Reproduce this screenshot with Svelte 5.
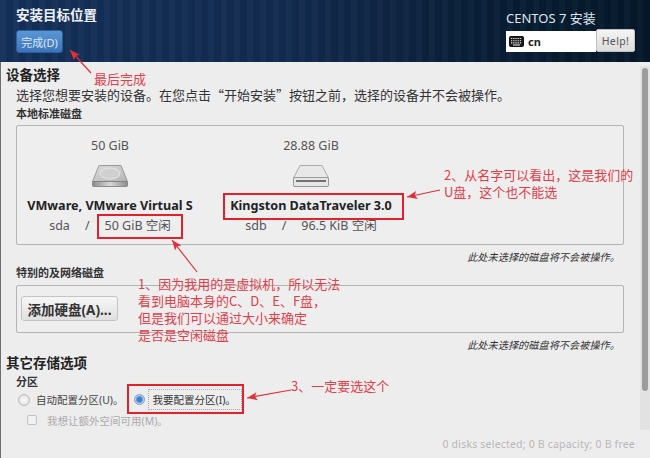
<script>
	const disks = [
		{ size: '50 GiB', name: 'VMware, VMware Virtual S', dev: 'sda', free: '50 GiB 空闲', kind: 'hdd' },
		{ size: '28.88 GiB', name: 'Kingston DataTraveler 3.0', dev: 'sdb', free: '96.5 KiB 空闲', kind: 'usb' }
	];

	const arrows = [
		{ x1: 91, y1: 73, x2: 70, y2: 50 },
		{ x1: 197, y1: 272, x2: 172, y2: 240 },
		{ x1: 440, y1: 190, x2: 407, y2: 197 },
		{ x1: 291, y1: 390, x2: 247, y2: 398 }
	];

	function head(a) {
		const ang = Math.atan2(a.y1 - a.y2, a.x1 - a.x2);
		const pt = (len, off) => {
			const x = a.x2 + Math.cos(ang + off) * len;
			const y = a.y2 + Math.sin(ang + off) * len;
			return `${x.toFixed(1)},${y.toFixed(1)}`;
		};
		return `${a.x2},${a.y2} ${pt(11, 0.38)} ${pt(8, 0)} ${pt(11, -0.38)}`;
	}
</script>

<div class="page" lang="zh-CN">
	<header>
		<div class="left">
			<h1>安装目标位置</h1>
			<button class="done">完成(D)</button>
		</div>
		<div class="right">
			<div class="product">CENTOS 7 安装</div>
			<div class="tools">
				<div class="layout">
					<svg width="15" height="11" viewBox="0 0 15 11">
						<rect x="0.5" y="0.5" width="14" height="10" rx="1" fill="#1c1c1c" stroke="#111" />
						<path d="M2 2.5h11M2 4.7h11M2 6.9h11" stroke="#e4e4e4" stroke-width="1.1" stroke-dasharray="1.3 0.9" />
						<path d="M4 9h7" stroke="#e4e4e4" stroke-width="1.1" />
					</svg>
					<span>cn</span>
				</div>
				<button class="help">Help!</button>
			</div>
		</div>
	</header>

	<main>
		<div class="content">
			<h2>设备选择</h2>
			<p class="desc">选择您想要安装的设备。在您点击“开始安装”按钮之前&#xFF0C;选择的设备并不会被操作。</p>
			<h3>本地标准磁盘</h3>
			<section class="box disks">
				{#each disks as d}
					<div class="disk">
						<div class="size">{d.size}</div>
						{#if d.kind === 'hdd'}
							<svg class="icon" width="36" height="22" viewBox="0 0 36 22">
								<defs>
									<linearGradient id="hddtop" x1="0" y1="0" x2="1" y2="1">
										<stop offset="0" stop-color="#dcdcdc" />
										<stop offset="1" stop-color="#b4b4b4" />
									</linearGradient>
									<linearGradient id="hddfront" x1="0" y1="0" x2="1" y2="0">
										<stop offset="0" stop-color="#8c8c8c" />
										<stop offset="0.5" stop-color="#d8d8d8" />
										<stop offset="1" stop-color="#8c8c8c" />
									</linearGradient>
								</defs>
								<path d="M7 0.5h22l6.5 16H0.5z" fill="url(#hddtop)" stroke="#9a9a9a" />
								<ellipse cx="18" cy="8.5" rx="10" ry="5.5" fill="#d0d0d0" stroke="#e8e8e8" />
								<rect x="0.5" y="16.5" width="35" height="5" rx="1" fill="url(#hddfront)" stroke="#7a7a7a" stroke-width="0.8" />
							</svg>
						{:else}
							<svg class="icon" width="36" height="22" viewBox="0 0 36 22">
								<path d="M7 0.5h22l6.5 12.5H0.5z" fill="#e8e8e8" stroke="#ababab" />
								<rect x="0.5" y="12.5" width="35" height="9" rx="1.5" fill="#e6e6e6" stroke="#999" />
								<path d="M3 16h30" stroke="#555" stroke-width="1.6" />
							</svg>
						{/if}
						<div class="name">{d.name}</div>
						<div class="sub"><span>{d.dev}</span><span>/</span><span>{d.free}</span></div>
					</div>
				{/each}
			</section>
			<p class="note">此处未选择的磁盘将不会被操作。</p>
			<h3 class="special">特别的及网络磁盘</h3>
			<section class="box network">
				<button class="add">添加硬盘(A)...</button>
			</section>
			<p class="note">此处未选择的磁盘将不会被操作。</p>
			<h2 class="other">其它存储选项</h2>
			<h3 class="part">分区</h3>
			<div class="radios">
				<label class="opt"><i class="radio"></i>自动配置分区(U)。</label>
				<label class="opt second"><i class="radio on"></i><span class="focus">我要配置分区(I)。</span></label>
			</div>
			<label class="extra"><i class="check"></i>我想让额外空间可用(M)。</label>
			<div class="summary">0 disks selected; 0 B capacity; 0 B free</div>
		</div>
		<div class="scrollbar"><div class="thumb"></div></div>
	</main>

	<!-- red notes drawn on top of the screenshot -->
	<div class="mark m1"></div>
	<div class="mark m2"></div>
	<div class="mark m3"></div>
	<svg class="arrows" width="650" height="458">
		{#each arrows as a}
			<line x1={a.x1} y1={a.y1} x2={a.x2} y2={a.y2} stroke="#e0303a" stroke-width="1.2" />
			<polygon points={head(a)} fill="#e0303a" />
		{/each}
	</svg>
	<div class="note-red n0">最后完成</div>
	<div class="note-red n1">1、因为我用的是虚拟机&#xFF0C;所以无法<br />看到电脑本身的C、D、E、F盘&#xFF0C;<br />但是我们可以通过大小来确定<br />是否是空闲磁盘</div>
	<div class="note-red n2">2、从名字可以看出&#xFF0C;这是我们的<br />U盘&#xFF0C;这个也不能选</div>
	<div class="note-red n3">3、一定要选这个</div>
</div>

<style>
	:global(body) {
		margin: 0;
	}

	.page {
		position: relative;
		width: 650px;
		height: 458px;
		overflow: hidden;
		background: #ededed;
		font-family: "Noto Sans", "Noto Sans CJK SC", sans-serif;
		color: #2e3436;
	}

	* {
		box-sizing: border-box;
	}

	header {
		height: 62px;
		display: flex;
		justify-content: space-between;
		padding: 8px 15px 0 16px;
		background:
			repeating-linear-gradient(90deg, rgba(255, 255, 255, 0.025) 0 6px, rgba(0, 0, 0, 0.03) 6px 13px),
			linear-gradient(90deg, #14305a 0%, #122a4e 45%, #071d33 80%, #05182a 100%);
	}

	h1 {
		margin: 0 0 7px;
		font-size: 13.5px;
		line-height: 15px;
		font-weight: 700;
		color: #eef1f4;
	}

	.done {
		display: block;
		width: 47px;
		height: 23px;
		padding: 0;
		border: 1px solid #2a5f9e;
		border-radius: 3px;
		background: linear-gradient(#5b97d6, #3b74b8);
		color: #dbe8f5;
		font: 11px "Noto Sans", "Noto Sans CJK SC", sans-serif;
	}

	.right {
		width: 129px;
	}

	.product {
		height: 21px;
		padding-top: 3px;
		font-size: 13px;
		line-height: 15px;
		color: #dfe5ea;
	}

	.tools {
		display: flex;
		align-items: flex-end;
		height: 23px;
	}

	.layout {
		display: flex;
		align-items: center;
		gap: 4px;
		width: 90px;
		height: 21px;
		padding-left: 3px;
		background: #fff;
		font-size: 11px;
		font-weight: 700;
		color: #222;
	}

	.help {
		width: 39px;
		height: 23px;
		padding: 0;
		border: 1px solid #c0c0c0;
		border-radius: 2px;
		background: linear-gradient(#f4f4f4, #dcdcdc);
		color: #555;
		font: 10.5px "Noto Sans", sans-serif;
		letter-spacing: 0.4px;
	}

	main {
		position: relative;
		height: 396px;
		border-left: 1px solid #6e6e6e;
		display: flex;
	}

	.content {
		flex: 1;
		padding: 4px 0 0 5px;
		min-width: 0;
	}

	h2 {
		margin: 0;
		font-size: 13.5px;
		line-height: 18px;
		font-weight: 700;
		color: #222;
	}

	.desc {
		margin: 2px 0 0 10px;
		font-family: "Noto Sans CJK SC", sans-serif;
		font-size: 13px;
		line-height: 17px;
		color: #333;
		white-space: nowrap;
	}

	h3 {
		margin: 4px 0 0 10px;
		font-size: 11px;
		line-height: 14px;
		font-weight: 700;
		color: #333;
	}

	.box {
		width: 608px;
		margin: 4px 0 0 10px;
		border: 1px solid #b4b4b4;
		border-radius: 2px;
		background: #eeeeee;
	}

	.disks {
		height: 120px;
		display: flex;
		gap: 15px;
		padding: 11px 0 0 0;
	}

	.disk {
		text-align: center;
		width: 186px;
		color: #444;
	}

	.size {
		font-size: 12.5px;
		line-height: 18px;
		color: #555;
	}

	.icon {
		display: block;
		margin: 10px auto 0;
	}

	.name {
		margin-top: 10px;
		font-size: 12.6px;
		line-height: 18px;
		font-weight: 700;
		color: #222;
		white-space: nowrap;
	}

	.sub {
		display: flex;
		justify-content: center;
		gap: 15px;
		margin-top: 3px;
		font-size: 12.5px;
		line-height: 16px;
		color: #555;
		white-space: nowrap;
	}

	.note {
		width: 604px;
		margin: 5px 0 0 10px;
		text-align: right;
		font-size: 10.2px;
		line-height: 14px;
		font-style: italic;
		color: #333;
	}

	.special {
		margin-top: 2px;
	}

	.network {
		height: 48px;
		margin-top: 5px;
		padding: 10px 0 0 4px;
	}

	.add {
		display: block;
		width: 97px;
		height: 25px;
		padding: 0;
		border: 1px solid #c4c4c4;
		border-radius: 3px;
		background: linear-gradient(#f6f6f6, #e0e0e0);
		color: #333;
		font: 700 13.5px "Noto Sans", "Noto Sans CJK SC", sans-serif;
	}

	.other {
		margin-top: 2px;
	}

	.part {
		margin-top: 3px;
	}

	.radios {
		display: flex;
		align-items: center;
		margin: 0 0 0 12px;
		height: 21px;
		font-size: 10.5px;
		color: #444;
	}

	.opt {
		display: flex;
		align-items: center;
	}

	.second {
		margin-left: 11px;
	}

	.radio {
		width: 12px;
		height: 12px;
		margin-right: 6px;
		border: 1px solid #bbb;
		border-radius: 50%;
		background: radial-gradient(#fafafa, #dcdcdc);
	}

	.radio.on {
		width: 11px;
		height: 11px;
		margin-right: 3px;
		border-color: #7f9fc6;
		background: radial-gradient(circle, #3f7fd0 0 2.5px, #bcd0e8 4px);
	}

	.focus {
		padding: 3px 5px 3px 3px;
		border: 1px dotted #aaa;
		height: 21px;
		line-height: 14px;
		color: #333;
		white-space: nowrap;
	}

	.extra {
		display: flex;
		align-items: center;
		margin: 0 0 0 21px;
		height: 20px;
		font-size: 10.5px;
		color: #aaa;
	}

	.check {
		width: 10px;
		height: 10px;
		margin-right: 10px;
		border: 1px solid #c4c4c4;
		border-radius: 2px;
		background: #f2f2f2;
	}

	.summary {
		margin: 7px 0 0 0;
		width: 629px;
		text-align: right;
		font-size: 10.5px;
		line-height: 14px;
		letter-spacing: 0.2px;
		color: #b8b8b8;
	}

	.scrollbar {
		position: absolute;
		top: 4px;
		right: 0;
		width: 10px;
		height: 364px;
		padding: 2px 1px 0 1px;
		background: #e2e2e2;
	}

	.thumb {
		width: 6px;
		height: 323px;
		margin-left: 1px;
		border-radius: 3px;
		background: #9c9c9c;
	}

	.mark {
		position: absolute;
		border: 2px solid #e0222e;
	}

	.m1 {
		left: 97px;
		top: 214px;
		width: 86px;
		height: 25px;
	}

	.m2 {
		left: 223px;
		top: 193px;
		width: 181px;
		height: 27px;
	}

	.m3 {
		left: 127px;
		top: 384px;
		width: 117px;
		height: 30px;
	}

	.arrows {
		position: absolute;
		left: 0;
		top: 0;
	}

	.note-red {
		position: absolute;
		color: #e0404c;
		font-family: "Noto Sans CJK SC", sans-serif;
		font-size: 13px;
		line-height: 17px;
		white-space: nowrap;
	}

	.n0 {
		left: 94px;
		top: 70px;
	}

	.n1 {
		left: 138px;
		top: 275px;
	}

	.n2 {
		left: 444px;
		top: 166px;
	}

	.n3 {
		left: 291px;
		top: 377px;
	}
</style>
